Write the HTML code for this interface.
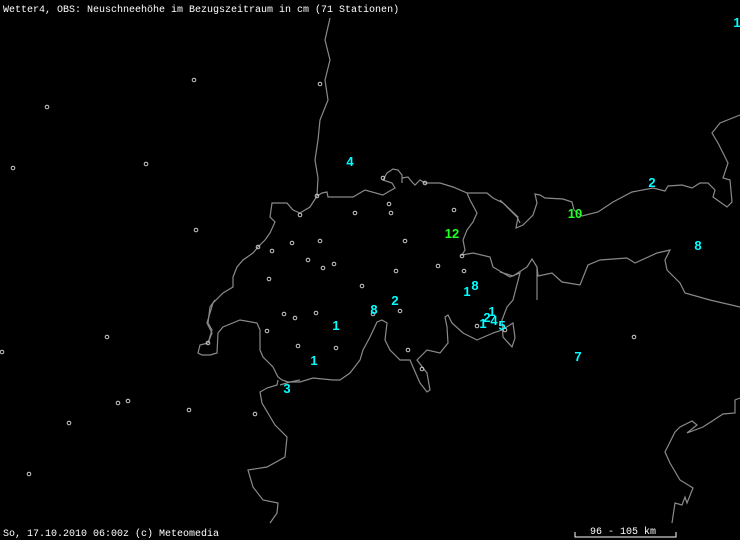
<!DOCTYPE html>
<html><head><meta charset="utf-8"><style>
html,body{margin:0;padding:0;background:#000;}
svg{display:block;}
.t{font-family:"Liberation Mono",monospace;font-size:10px;fill:#fff;}
.n{font-family:"Liberation Sans",sans-serif;font-size:13px;font-weight:bold;text-anchor:middle;}
.c{fill:#0ff;}.g{fill:#2f2;}
</style></head><body>
<svg width="740" height="540" viewBox="0 0 740 540" xmlns="http://www.w3.org/2000/svg">
<rect width="740" height="540" fill="#000"/>
<g fill="none" stroke="#8a8a8a" stroke-width="1.2">
<polyline points="330,18 325,40 330,60 325,80 328,100 320,120 318,140 315,160 318,178 317,196"/>
<polyline points="317,196 322,193 327,192 328,197 353,197 365,190 383,195 388,192 395,188 392,183 383,180 387,173 393,169 398,170 402,175 402,183"/>
<polyline points="402,178 408,177 412,182 415,185 420,180 425,183 440,183 453,187 467,193 470,200 477,213 473,222 467,230 463,240 465,250 462,255 473,253 490,257 493,267 510,277 520,273 513,300 507,307 502,320 503,337 512,347 515,338 513,323 502,330 493,333 477,340 463,333 452,323 448,315 445,317 447,327 448,343 440,353 427,350 417,360 427,373 430,390 427,392 420,383 413,367 410,360 400,360 390,350 385,340 387,323 382,320 377,322 370,337 363,350 360,360 350,373 340,380 333,380 313,378 300,382 288,382 282,380 278,377 273,367 263,357 260,350 260,330 257,323 240,320 223,327 218,333 217,353 210,355 202,355 198,353 200,345 208,343 212,330 208,323 210,307 215,300"/>
<polyline points="208,343 212,333 207,323 213,303 223,293 233,287 233,277 237,267 243,260 253,253 258,247 265,240 270,233 275,222 270,217 272,203 278,203 287,203 293,210 300,213 310,207 317,196"/>
<polyline points="467,193 487,193 493,198 503,203 517,217 520,223"/>
<polyline points="500,200 518,217 516,228 523,225 533,215 537,203 535,194 540,195 545,198 563,199 572,202 574,210 582,216 598,212 613,202 632,192 653,188 665,191 668,186 682,185 692,188 700,183 708,183 715,190 713,197 727,207 732,202 730,180 723,178 728,163 718,143 712,133 720,123 740,115"/>
<polyline points="500,272 513,276 527,267 532,259 537,267 538,276 552,273 562,282 580,285 588,265 600,260 627,258 635,263 657,253 670,250 665,260 667,270 680,283 685,293 710,300 740,307"/>
<polyline points="537,267 537,300"/>
<polyline points="278,380 277,385 267,388 260,392 262,403 275,425 287,437 285,457 267,467 248,470 253,487 263,500 278,503 277,513 270,523"/>
<polyline points="280,385 290,382 300,380"/>
<polyline points="740,398 735,400 735,413 723,414 703,427 687,433 697,425 692,421 680,427 675,432 665,452 670,463 680,480 693,488 687,503 685,497 682,505 675,503 672,523"/>
</g>
<g fill="none" stroke="#ccc" stroke-width="1">
<circle cx="194" cy="80" r="1.8"/><circle cx="320" cy="84" r="1.8"/><circle cx="47" cy="107" r="1.8"/><circle cx="13" cy="168" r="1.8"/><circle cx="146" cy="164" r="1.8"/><circle cx="196" cy="230" r="1.8"/><circle cx="107" cy="337" r="1.8"/><circle cx="2" cy="352" r="1.8"/><circle cx="128" cy="401" r="1.8"/><circle cx="118" cy="403" r="1.8"/><circle cx="189" cy="410" r="1.8"/><circle cx="69" cy="423" r="1.8"/><circle cx="29" cy="474" r="1.8"/><circle cx="634" cy="337" r="1.8"/><circle cx="255" cy="414" r="1.8"/>
<circle cx="383" cy="178" r="1.8"/><circle cx="425" cy="183" r="1.8"/><circle cx="317" cy="196" r="1.8"/><circle cx="389" cy="204" r="1.8"/><circle cx="300" cy="215" r="1.8"/><circle cx="355" cy="213" r="1.8"/><circle cx="391" cy="213" r="1.8"/><circle cx="454" cy="210" r="1.8"/><circle cx="320" cy="241" r="1.8"/><circle cx="292" cy="243" r="1.8"/><circle cx="405" cy="241" r="1.8"/><circle cx="258" cy="247" r="1.8"/><circle cx="272" cy="251" r="1.8"/><circle cx="308" cy="260" r="1.8"/><circle cx="462" cy="256" r="1.8"/><circle cx="334" cy="264" r="1.8"/><circle cx="323" cy="268" r="1.8"/><circle cx="438" cy="266" r="1.8"/><circle cx="396" cy="271" r="1.8"/><circle cx="464" cy="271" r="1.8"/><circle cx="269" cy="279" r="1.8"/><circle cx="362" cy="286" r="1.8"/><circle cx="400" cy="311" r="1.8"/><circle cx="316" cy="313" r="1.8"/><circle cx="284" cy="314" r="1.8"/><circle cx="295" cy="318" r="1.8"/><circle cx="373" cy="314" r="1.8"/><circle cx="267" cy="331" r="1.8"/><circle cx="477" cy="326" r="1.8"/><circle cx="505" cy="330" r="1.8"/><circle cx="208" cy="343" r="1.8"/><circle cx="298" cy="346" r="1.8"/><circle cx="336" cy="348" r="1.8"/><circle cx="408" cy="350" r="1.8"/><circle cx="422" cy="369" r="1.8"/>
</g>
<g class="n">
<text class="c" x="350" y="166">4</text>
<text class="c" x="652" y="187">2</text>
<text class="g" x="575" y="218">10</text>
<text class="g" x="452" y="238">12</text>
<text class="c" x="698" y="250">8</text>
<text class="c" x="467" y="296">1</text>
<text class="c" x="475" y="290">8</text>
<text class="c" x="395" y="305">2</text>
<text class="c" x="374" y="314">8</text>
<text class="c" x="336" y="330">1</text>
<text class="c" x="492" y="316">1</text>
<text class="c" x="487" y="322">2</text>
<text class="c" x="494" y="325">4</text>
<text class="c" x="483" y="328">1</text>
<text class="c" x="502" y="330">5</text>
<text class="c" x="578" y="361">7</text>
<text class="c" x="314" y="365">1</text>
<text class="c" x="287" y="393">3</text>
<text class="c" x="737" y="27">1</text>
</g>
<text class="t" x="3" y="12">Wetter4, OBS: Neuschneehöhe im Bezugszeitraum in cm (71 Stationen)</text>
<text class="t" x="3" y="536">So, 17.10.2010 06:00z (c) Meteomedia</text>
<polyline points="575,532 575,537 676,537 676,532" fill="none" stroke="#fff" stroke-width="1"/>
<text class="t" x="590" y="534">96 - 105 km</text>
</svg>
</body></html>
